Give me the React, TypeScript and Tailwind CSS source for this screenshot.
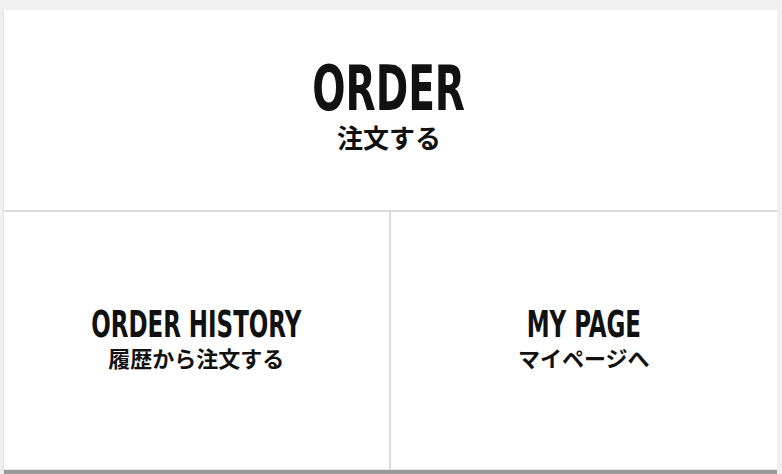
const EN = "font-['Liberation_Sans_Narrow','DejaVu_Sans_Condensed','Liberation_Sans',sans-serif]";
const JP = "font-['Noto_Sans_CJK_JP',sans-serif]";

function MenuLabel({ en, ja, big }: { en: string; ja: string; big?: boolean }) {
  return (
    <div className="flex flex-col items-center text-[#111]">
      <span
        className={`${EN} font-bold leading-none inline-block scale-x-[0.69] whitespace-nowrap ${
          big ? "text-[63px]" : "text-[37px]"
        }`}
      >
        {en}
      </span>
      <span
        className={`${JP} font-bold leading-none whitespace-nowrap ${
          big ? "text-[26px] mt-[4px]" : "text-[22px] mt-[3px]"
        }`}
      >
        {ja}
      </span>
    </div>
  );
}

export default function App() {
  return (
    <div className="min-h-screen bg-[#f0f0f0] pt-[10px] pl-[3px] pr-[5px] overflow-hidden">
      <div className="bg-white border-l border-[#e2e2e2]">
        {/* Order */}
        <a className="h-[202px] flex items-center justify-center border-b-2 border-[#dcdcdc] pb-[14px] pr-[3px]">
          <MenuLabel en="ORDER" ja="注文する" big />
        </a>

        {/* History / My page */}
        <div className="grid grid-cols-2 h-[258px] border-b border-[#e6e6e6]">
          <a className="flex items-center justify-center border-r-2 border-[#dcdcdc] pb-[8px]">
            <MenuLabel en="ORDER HISTORY" ja="履歴から注文する" />
          </a>
          <a className="flex items-center justify-center pb-[8px]">
            <MenuLabel en="MY PAGE" ja="マイページへ" />
          </a>
        </div>

        <div className="h-[20px] bg-[#9a9a9a]" />
      </div>
    </div>
  );
}
